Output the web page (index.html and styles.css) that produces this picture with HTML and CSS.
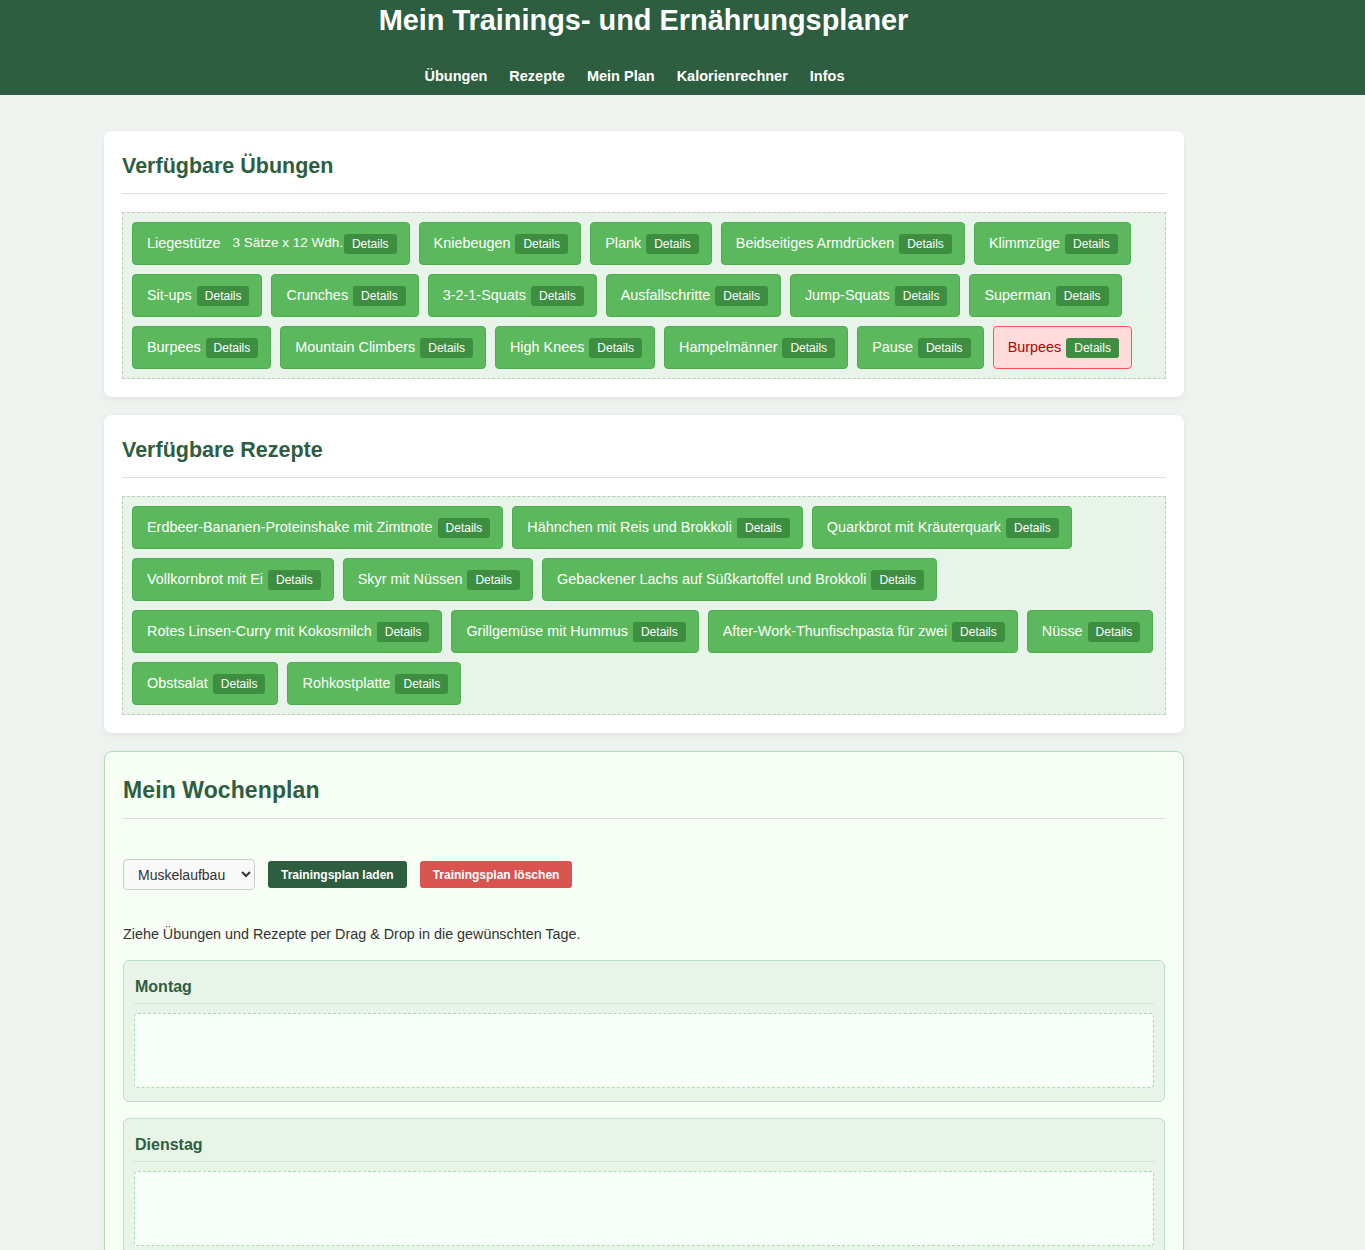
FILE: index.html
```html
<!DOCTYPE html>
<html lang="de">
<head>
<meta charset="utf-8">
<title>Mein Trainings- und Ernährungsplaner</title>
<link rel="stylesheet" href="styles.css">
</head>
<body>
<header class="site-header">
  <h1 class="site-title">Mein Trainings- und Ernährungsplaner</h1>
  <nav class="site-nav">
    <a href="#uebungen">Übungen</a>
    <a href="#rezepte">Rezepte</a>
    <a href="#plan">Mein Plan</a>
    <a href="#kalorien">Kalorienrechner</a>
    <a href="#infos">Infos</a>
  </nav>
</header>

<main class="main">
  <section class="card" id="uebungen">
    <h2 class="card-title">Verfügbare Übungen</h2>
    <div class="pool">
      <div class="chip"><span>Liegestütze</span><span class="info">3 Sätze x 12 Wdh.</span><span class="badge tight">Details</span></div>
      <div class="chip"><span>Kniebeugen</span><span class="badge">Details</span></div>
      <div class="chip"><span>Plank</span><span class="badge">Details</span></div>
      <div class="chip"><span>Beidseitiges Armdrücken</span><span class="badge">Details</span></div>
      <div class="chip"><span>Klimmzüge</span><span class="badge">Details</span></div>
      <div class="chip"><span>Sit-ups</span><span class="badge">Details</span></div>
      <div class="chip"><span>Crunches</span><span class="badge">Details</span></div>
      <div class="chip"><span>3-2-1-Squats</span><span class="badge">Details</span></div>
      <div class="chip"><span>Ausfallschritte</span><span class="badge">Details</span></div>
      <div class="chip"><span>Jump-Squats</span><span class="badge">Details</span></div>
      <div class="chip"><span>Superman</span><span class="badge">Details</span></div>
      <div class="chip"><span>Burpees</span><span class="badge">Details</span></div>
      <div class="chip"><span>Mountain Climbers</span><span class="badge">Details</span></div>
      <div class="chip"><span>High Knees</span><span class="badge">Details</span></div>
      <div class="chip"><span>Hampelmänner</span><span class="badge">Details</span></div>
      <div class="chip"><span>Pause</span><span class="badge">Details</span></div>
      <div class="chip chip-warn"><span>Burpees</span><span class="badge">Details</span></div>
    </div>
  </section>

  <section class="card" id="rezepte">
    <h2 class="card-title">Verfügbare Rezepte</h2>
    <div class="pool">
      <div class="chip"><span>Erdbeer-Bananen-Proteinshake mit Zimtnote</span><span class="badge">Details</span></div>
      <div class="chip"><span>Hähnchen mit Reis und Brokkoli</span><span class="badge">Details</span></div>
      <div class="chip"><span>Quarkbrot mit Kräuterquark</span><span class="badge">Details</span></div>
      <div class="chip"><span>Vollkornbrot mit Ei</span><span class="badge">Details</span></div>
      <div class="chip"><span>Skyr mit Nüssen</span><span class="badge">Details</span></div>
      <div class="chip"><span>Gebackener Lachs auf Süßkartoffel und Brokkoli</span><span class="badge">Details</span></div>
      <div class="chip"><span>Rotes Linsen-Curry mit Kokosmilch</span><span class="badge">Details</span></div>
      <div class="chip"><span>Grillgemüse mit Hummus</span><span class="badge">Details</span></div>
      <div class="chip"><span>After-Work-Thunfischpasta für zwei</span><span class="badge">Details</span></div>
      <div class="chip"><span>Nüsse</span><span class="badge">Details</span></div>
      <div class="chip"><span>Obstsalat</span><span class="badge">Details</span></div>
      <div class="chip"><span>Rohkostplatte</span><span class="badge">Details</span></div>
    </div>
  </section>

  <section class="card card-plan" id="plan">
    <h2 class="card-title plan-title">Mein Wochenplan</h2>
    <div class="controls">
      <select class="plan-select">
        <option>Muskelaufbau</option>
        <option>Abnehmen</option>
        <option>Ausdauer</option>
      </select>
      <button class="btn btn-dark" type="button">Trainingsplan laden</button>
      <button class="btn btn-red" type="button">Trainingsplan löschen</button>
    </div>
    <p class="hint">Ziehe Übungen und Rezepte per Drag &amp; Drop in die gewünschten Tage.</p>
    <div class="day">
      <h3 class="day-title">Montag</h3>
      <div class="dropzone"></div>
    </div>
    <div class="day">
      <h3 class="day-title">Dienstag</h3>
      <div class="dropzone"></div>
    </div>
  </section>
</main>
</body>
</html>
```

FILE: styles.css
```css
* {
  box-sizing: border-box;
}

body {
  margin: 0;
  background: #eef3ef;
  font-family: "Liberation Sans", Arial, sans-serif;
  color: #333;
  font-size: 14px;
}

.site-header {
  background: #2c5e3f;
  color: #fff;
  text-align: center;
  height: 95px;
  padding: 5px 78px 0 0;
}

.site-title {
  margin: 0;
  font-size: 28.9px;
  line-height: 31px;
  font-weight: bold;
}

.site-nav {
  display: flex;
  justify-content: center;
  gap: 22px;
  margin-top: 32px;
  padding-right: 18px;
}

.site-nav a {
  color: #fff;
  text-decoration: none;
  font-weight: bold;
  font-size: 14.5px;
  line-height: 17px;
}

.main {
  padding: 36px 0 40px 104px;
}

.card {
  width: 1080px;
  background: #fff;
  border-radius: 8px;
  padding: 18px;
  box-shadow: 0 2px 6px rgba(0, 0, 0, 0.06);
  margin-bottom: 18px;
}

.card-title {
  margin: 0 0 18px;
  font-size: 21.5px;
  line-height: 32px;
  color: #2c5e3f;
  padding: 1px 0 11px;
  border-bottom: 1px solid #dddddd;
}

.pool {
  display: flex;
  flex-wrap: wrap;
  gap: 9px;
  padding: 9px;
  background: #e8f3e9;
  border: 1px dashed #c4c8c4;
}

.chip {
  display: inline-flex;
  align-items: center;
  background: #5cb85c;
  border: 1px solid #4cae4c;
  border-radius: 4px;
  color: #fff;
  font-size: 14.4px;
  line-height: 23px;
  padding: 9px 12px 9px 14px;
}

.chip-warn {
  background: #ffdcdc;
  border-color: #ff5252;
  color: #b00000;
}

.info {
  margin-left: 12px;
  font-size: 13.5px;
  position: relative;
  top: -1px;
}

.badge {
  display: inline-block;
  margin-left: 5px;
  background: #3e8e41;
  color: #fff;
  font-size: 12px;
  line-height: 14px;
  padding: 3px 8px;
  border-radius: 3px;
}

.badge.tight {
  margin-left: 1px;
}

.card-plan {
  background: #f6fef6;
  border: 1px solid #b2dcb6;
  box-shadow: 0 2px 8px rgba(0, 0, 0, 0.05);
}

.plan-title {
  font-size: 23px;
  line-height: 40px;
  padding: 0 0 8px;
  margin-bottom: 0;
  letter-spacing: 0.1px;
}

.controls {
  display: flex;
  align-items: center;
  gap: 13px;
  margin-top: 40px;
}

.plan-select {
  width: 132px;
  height: 31px;
  font-family: "Liberation Sans", Arial, sans-serif;
  font-size: 14px;
  color: #333;
  background: #f9f9f9;
  border: 1px solid #cccccc;
  border-radius: 4px;
  padding: 0 8px 0 10px;
}

.btn {
  height: 27px;
  border: none;
  border-radius: 3px;
  color: #fff;
  font-family: "Liberation Sans", Arial, sans-serif;
  font-weight: bold;
  font-size: 12px;
  padding: 0 13px;
}

.btn-dark {
  background: #2c5e3f;
}

.btn-red {
  background: #d9534f;
}

.hint {
  margin: 34px 0 16px;
  line-height: 20px;
  font-size: 14.35px;
  color: #333;
}

.day {
  background: #e9f4e9;
  border: 1px solid #b8e0c2;
  border-radius: 6px;
  padding: 10px 10px 13px;
  margin-bottom: 16px;
}

.day-title {
  margin: 0 0 9px;
  padding: 6px 0 6px 1px;
  font-size: 16px;
  line-height: 20px;
  color: #2c5e3f;
  border-bottom: 1px solid #cce6d2;
}

.dropzone {
  height: 75px;
  background: #f8fff8;
  border: 1px dashed #a8dcae;
  border-radius: 4px;
}
```
